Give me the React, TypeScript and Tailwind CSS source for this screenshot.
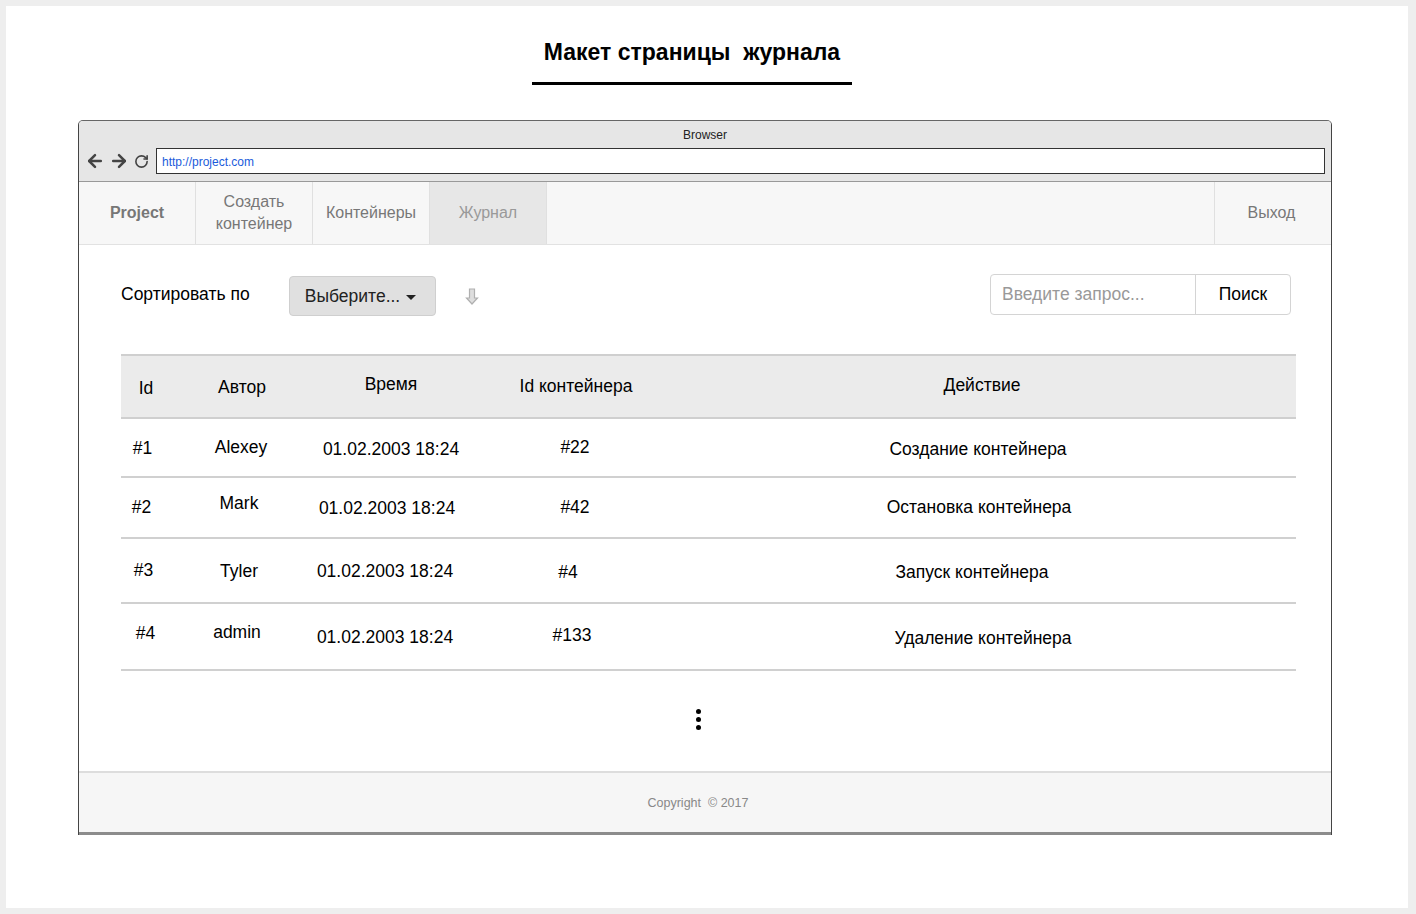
import { ArrowLeft, ArrowRight, RotateCw } from 'lucide-react'

const rows = [
  {
    h: 'h-[59px]',
    cells: [
      ['#1', 'pr-[7px] pt-[2px]'],
      ['Alexey', 'pr-[2px]'],
      ['01.02.2003 18:24', 'pt-[4px]'],
      ['#22', 'pr-[2px]'],
      ['Создание контейнера', 'pr-[4px] pt-[4px]'],
    ],
  },
  {
    h: 'h-[61px]',
    cells: [
      ['#2', 'pr-[9px] pt-[0px]'],
      ['Mark', 'pr-[6px] pb-[9px]'],
      ['01.02.2003 18:24', 'pr-[8px] pt-[2px]'],
      ['#42', 'pr-[2px]'],
      ['Остановка контейнера', 'pr-[2px] pt-[0px]'],
    ],
  },
  {
    h: 'h-[65px]',
    cells: [
      ['#3', 'pr-[5px] pt-[0px]'],
      ['Tyler', 'pr-[6px] pt-[2px]'],
      ['01.02.2003 18:24', 'pr-[12px] pt-[2px]'],
      ['#4', 'pr-[16px] pt-[4px]'],
      ['Запуск контейнера', 'pr-[16px] pt-[4px]'],
    ],
  },
  {
    h: 'h-[67px]',
    cells: [
      ['#4', 'pr-[1px] pb-[6px]'],
      ['admin', 'pr-[10px] pb-[8px]'],
      ['01.02.2003 18:24', 'pr-[12px] pt-[2px]'],
      ['#133', 'pr-[8px] pb-[2px]'],
      ['Удаление контейнера', 'pl-[6px] pt-[4px]'],
    ],
  },
]

const cols = 'grid grid-cols-[50px_142px_156px_214px_594px_1fr] items-center text-center'

export default function App() {
  return (
    <div className="min-h-screen bg-[#eeeeee] pt-[6px] pl-[6px] font-['Liberation_Sans',Arial,sans-serif] text-black">
      <div className="h-[902px] w-[1402px] bg-white pt-[33px]">
        <div className="ml-[526px] w-[320px]">
          <h1 className="whitespace-pre text-center text-[23px] font-bold leading-[26px]">
            Макет страницы  журнала
          </h1>
          <div className="mt-[17px] h-[3px] bg-black" />
        </div>

        <div className="ml-[72px] mt-[35px] w-[1254px] overflow-hidden rounded-t-[5px] border border-b-0 border-[#444] border-t-[#666]">
          <div className="h-[61px] border-b border-[#999] bg-[#e6e6e6]">
            <div className="pt-[7px] text-center text-[12px] leading-[14px] text-[#222]">Browser</div>
            <div className="mt-[6px] flex items-center px-[6px]">
              <ArrowLeft className="h-[20px] w-[20px] text-[#444]" strokeWidth={3} />
              <ArrowRight className="ml-[4px] h-[20px] w-[20px] text-[#444]" strokeWidth={3} />
              <RotateCw className="ml-[5px] h-[15px] w-[15px] text-[#444]" strokeWidth={2.6} />
              <div className="ml-[7px] flex h-[26px] flex-1 items-center border-[1.5px] border-[#333] bg-white px-[5px] pt-[2px] text-[12px] text-[#1a5bdb]">
                http://project.com
              </div>
            </div>
          </div>

          <nav className="flex h-[63px] border-b border-[#e2e2e2] bg-[#f7f7f7] text-[16px] text-[#777]">
            <div className="flex w-[117px] items-center justify-center border-r border-[#e0e0e0] font-bold">Project</div>
            <div className="flex w-[117px] items-center justify-center border-r border-[#e0e0e0] text-center leading-[22px]">
              Создать
              <br />
              контейнер
            </div>
            <div className="flex w-[117px] items-center justify-center border-r border-[#e0e0e0]">Контейнеры</div>
            <div className="flex w-[117px] items-center justify-center border-r border-[#e0e0e0] bg-[#e7e7e7] text-[#999]">Журнал</div>
            <div className="flex-1" />
            <div className="flex w-[117px] items-center justify-center border-l border-[#e0e0e0] pr-[3px]">Выход</div>
          </nav>

          <main className="h-[526px] bg-white pl-[42px] pr-[34px] text-[17.5px]">
            <div className="flex h-[109px] items-center pb-[7px]">
              <span className="w-[168px] pb-[4px]">Сортировать по</span>
              <button className="flex h-[40px] w-[147px] items-center justify-center gap-[6px] rounded-[4px] border border-[#cfcfcf] bg-[#e0e0e0] pr-[4px] text-[17.5px] text-[#222]">
                Выберите...
                <span className="mt-[2px] h-0 w-0 border-x-[5.5px] border-t-[5px] border-x-transparent border-t-[#222]" />
              </button>
              <svg className="ml-[29px] mt-[0px]" width="14" height="17" viewBox="0 0 14 17">
                <path d="M4.5 1h5v9h3L7 16 1.5 10h3z" fill="#dedede" stroke="#b0b0b0" strokeWidth="1.2" />
              </svg>
              <div className="ml-auto mb-[4px] mr-[6px] flex h-[41px] overflow-hidden rounded-[4px] border border-[#d4d4d4]">
                <div className="flex w-[205px] items-center border-r border-[#d4d4d4] pl-[11px] text-[#999]">Введите запрос...</div>
                <div className="flex w-[94px] items-center justify-center">Поиск</div>
              </div>
            </div>

            <div className="mr-[1px] border-t-2 border-[#cfcfcf]">
              <div className={`${cols} h-[63px] border-b-2 border-[#cfcfcf] bg-[#ebebeb]`}>
                <span className="pt-[3px]">Id</span>
                <span className="pt-[2px]">Автор</span>
                <span className="pb-[4px]">Время</span>
                <span>Id контейнера</span>
                <span className="pb-[2px] pl-[4px]">Действие</span>
                <span />
              </div>
              {rows.map((r, i) => (
                <div key={i} className={`${cols} ${r.h} border-b-2 border-[#d0d0d0]`}>
                  {r.cells.map(([text, cls]) => (
                    <span key={text} className={cls}>
                      {text}
                    </span>
                  ))}
                  <span />
                </div>
              ))}
            </div>

            <div className="flex flex-col items-center gap-[3px] pt-[38px] pr-[21px]">
              <span className="h-[5px] w-[5px] rounded-full bg-black" />
              <span className="h-[5px] w-[5px] rounded-full bg-black" />
              <span className="h-[5px] w-[5px] rounded-full bg-black" />
            </div>
          </main>

          <footer className="flex h-[64px] items-center justify-center border-t-2 border-b-[3px] border-t-[#dddddd] border-b-[#8c8c8c] bg-[#f6f6f6] pr-[14px] pt-[2px] text-[12.5px] text-[#888]">
            <span className="whitespace-pre">Copyright  © 2017</span>
          </footer>
        </div>
      </div>
    </div>
  )
}
